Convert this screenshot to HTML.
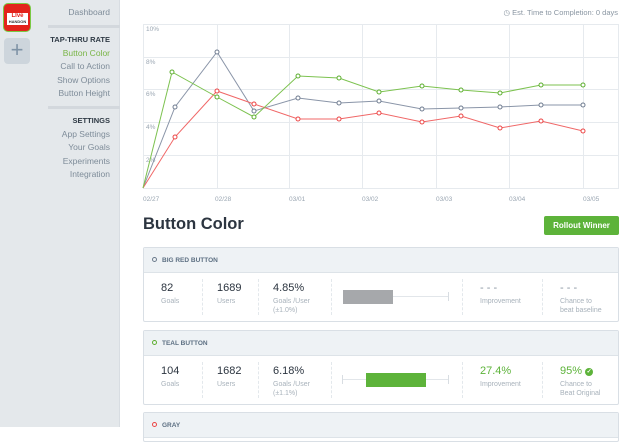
<!DOCTYPE html>
<html><head><meta charset="utf-8"><style>
*{margin:0;padding:0;box-sizing:border-box}
body{width:640px;height:427px;overflow:hidden;background:#fff;font-family:"Liberation Sans",sans-serif;position:relative}
.side{position:absolute;left:0;top:0;width:120px;height:427px;background:#e4e8eb;border-right:1px solid #d8dde2}
.logo{position:absolute;left:3px;top:3px;width:28px;height:29px;background:#e3231b;border:1px solid #7ac943;border-radius:5px}
.logo .w{position:absolute;left:3px;top:9px;width:21px;height:12px;background:#fff;font-size:6px;line-height:6px;text-align:center;color:#e3231b;font-weight:bold}
.logo .w small{display:block;font-size:4px;line-height:5px;color:#333}
.plus{position:absolute;left:4px;top:38px;width:26px;height:26px;background:#cdd5dc;border-radius:4px;color:#7f93a6;font-size:22px;line-height:24px;text-align:center}
.nav{position:absolute;right:9px;text-align:right;font-size:8.5px;color:#7e8c99;width:90px}
.nav div{height:13.5px;line-height:13.5px}
.nav .h{font-weight:bold;color:#2f3a45;font-size:7.5px}
.sep{position:absolute;left:48px;width:72px;height:3px;background:#d3d8dd}
.eta{position:absolute;right:22px;top:8px;font-size:7.5px;color:#8a96a2}
.title{position:absolute;left:143px;top:215px;font-size:16.5px;font-weight:bold;color:#2c3540}
.btn{position:absolute;left:544px;top:216px;width:75px;height:19px;background:#5db33a;border-radius:2px;color:#fff;font-size:8px;font-weight:bold;text-align:center;line-height:19px}
.card{position:absolute;left:143px;width:476px;border:1px solid #d9dfe5;border-radius:2px;background:#fff}
.ch{height:25px;background:#eef2f5;border-bottom:1px solid #dde3e8;font-size:6.5px;font-weight:bold;color:#5c6f82;line-height:25px;padding-left:8px}
.ch i{display:inline-block;width:5px;height:5px;border:1.2px solid;border-radius:50%;margin-right:5px;vertical-align:0}
.cb{height:48px;position:relative}
.s{position:absolute;top:9px;font-size:11px;color:#2c3540}
.s span{display:block;font-size:7px;color:#a8b2bb;line-height:9px;margin-top:3px}
.v{position:absolute;top:6px;bottom:6px;width:0;border-left:1px dashed #e3e8ec}
</style></head><body>
<div class="side">
<div class="logo"><div class="w">LIve<small>HANDON</small></div></div>
<div class="plus">+</div>
<div class="nav" style="top:6px"><div>Dashboard</div></div>
<div class="sep" style="top:25px"></div>
<div class="nav" style="top:33px"><div class="h">TAP-THRU RATE</div><div style="color:#7ab547">Button Color</div><div>Call to Action</div><div>Show Options</div><div>Button Height</div></div>
<div class="sep" style="top:106px"></div>
<div class="nav" style="top:114px"><div class="h">SETTINGS</div><div>App Settings</div><div>Your Goals</div><div>Experiments</div><div>Integration</div></div>
</div>
<div class="eta">◷ Est. Time to Completion: 0 days</div>
<svg style="position:absolute;left:0;top:0" width="640" height="210">
<g stroke="#e6eaee" stroke-width="1" fill="none">
<rect x="143.5" y="24.5" width="475" height="164"/>
<line x1="143" y1="57.5" x2="618" y2="57.5"/><line x1="143" y1="89.5" x2="618" y2="89.5"/><line x1="143" y1="122.5" x2="618" y2="122.5"/><line x1="143" y1="155.5" x2="618" y2="155.5"/>
<line x1="217.5" y1="24" x2="217.5" y2="188"/><line x1="289.5" y1="24" x2="289.5" y2="188"/><line x1="362.5" y1="24" x2="362.5" y2="188"/><line x1="436.5" y1="24" x2="436.5" y2="188"/><line x1="509.5" y1="24" x2="509.5" y2="188"/><line x1="583.5" y1="24" x2="583.5" y2="188"/>
</g>
<g font-size="6.5" fill="#9aa6b2" font-family="Liberation Sans">
<text x="146" y="31">10%</text><text x="146" y="64">8%</text><text x="146" y="96">6%</text><text x="146" y="129">4%</text><text x="146" y="162">2%</text>
<text x="143" y="201">02/27</text><text x="215" y="201">02/28</text><text x="289" y="201">03/01</text><text x="362" y="201">03/02</text><text x="436" y="201">03/03</text><text x="509" y="201">03/04</text><text x="583" y="201">03/05</text>
</g>
<g fill="none" stroke-width="1">
<polyline stroke="#8a95a8" points="143,188 175,107 217,52 254,111 298,98 339,103 379,101 422,109 461,108 500,107 541,105 583,105"/>
<polyline stroke="#f06767" points="143,188 175,137 217,91 254,104 298,119 339,119 379,113 422,122 461,116 500,128 541,121 583,131"/>
<polyline stroke="#7cc24f" points="143,188 172,72 217,97 254,117 298,76 339,78 379,92 422,86 461,90 500,93 541,85 583,85"/>
</g>
<g fill="#fff" stroke-width="1">
<g stroke="#6f7c90"><circle cx="175" cy="107" r="2"/><circle cx="217" cy="52" r="2"/><circle cx="254" cy="111" r="2"/><circle cx="298" cy="98" r="2"/><circle cx="339" cy="103" r="2"/><circle cx="379" cy="101" r="2"/><circle cx="422" cy="109" r="2"/><circle cx="461" cy="108" r="2"/><circle cx="500" cy="107" r="2"/><circle cx="541" cy="105" r="2"/><circle cx="583" cy="105" r="2"/></g>
<g stroke="#ec4545"><circle cx="175" cy="137" r="2"/><circle cx="217" cy="91" r="2"/><circle cx="254" cy="104" r="2"/><circle cx="298" cy="119" r="2"/><circle cx="339" cy="119" r="2"/><circle cx="379" cy="113" r="2"/><circle cx="422" cy="122" r="2"/><circle cx="461" cy="116" r="2"/><circle cx="500" cy="128" r="2"/><circle cx="541" cy="121" r="2"/><circle cx="583" cy="131" r="2"/></g>
<g stroke="#5cae2e"><circle cx="172" cy="72" r="2"/><circle cx="217" cy="97" r="2"/><circle cx="254" cy="117" r="2"/><circle cx="298" cy="76" r="2"/><circle cx="339" cy="78" r="2"/><circle cx="379" cy="92" r="2"/><circle cx="422" cy="86" r="2"/><circle cx="461" cy="90" r="2"/><circle cx="500" cy="93" r="2"/><circle cx="541" cy="85" r="2"/><circle cx="583" cy="85" r="2"/></g>
</g>
</svg>
<div class="title">Button Color</div>
<div class="btn">Rollout Winner</div>

<div class="card" style="top:247px">
<div class="ch"><i style="color:#6b7a8c"></i>BIG RED BUTTON</div>
<div class="cb">
<div class="s" style="left:17px">82<span>Goals</span></div><div class="v" style="left:58px"></div>
<div class="s" style="left:73px">1689<span>Users</span></div><div class="v" style="left:114px"></div>
<div class="s" style="left:129px">4.85%<span>Goals /User<br>(±1.0%)</span></div><div class="v" style="left:187px"></div>
<div style="position:absolute;left:199px;top:17px;width:50px;height:14px;background:#a6a8ab"></div>
<div style="position:absolute;left:249px;top:23px;width:55px;height:1px;background:#e2e6ea"></div>
<div style="position:absolute;left:304px;top:19px;width:1px;height:9px;background:#d8dde2"></div>
<div class="v" style="left:318px"></div>
<div class="s" style="left:336px;color:#8a96a2">- - -<span>Improvement</span></div><div class="v" style="left:398px"></div>
<div class="s" style="left:416px;color:#8a96a2">- - -<span>Chance to<br>beat baseline</span></div>
</div></div>

<div class="card" style="top:330px">
<div class="ch"><i style="color:#5cae2e"></i>TEAL BUTTON</div>
<div class="cb">
<div class="s" style="left:17px">104<span>Goals</span></div><div class="v" style="left:58px"></div>
<div class="s" style="left:73px">1682<span>Users</span></div><div class="v" style="left:114px"></div>
<div class="s" style="left:129px">6.18%<span>Goals /User<br>(±1.1%)</span></div><div class="v" style="left:187px"></div>
<div style="position:absolute;left:198px;top:23px;width:106px;height:1px;background:#e2e6ea"></div>
<div style="position:absolute;left:198px;top:19px;width:1px;height:9px;background:#d8dde2"></div>
<div style="position:absolute;left:304px;top:19px;width:1px;height:9px;background:#d8dde2"></div>
<div style="position:absolute;left:222px;top:17px;width:60px;height:14px;background:#5db33a"></div>
<div class="v" style="left:318px"></div>
<div class="s" style="left:336px;color:#5db33a">27.4%<span>Improvement</span></div><div class="v" style="left:398px"></div>
<div class="s" style="left:416px;color:#5db33a">95% <b style="display:inline-block;width:8px;height:8px;border-radius:50%;background:#5db33a;color:#fff;font-size:6px;line-height:8px;text-align:center;vertical-align:1px">✓</b><span>Chance to<br>Beat Original</span></div>
</div></div>

<div class="card" style="top:412px;height:30px">
<div class="ch"><i style="color:#ec4545"></i>GRAY</div>
</div>
</body></html>
